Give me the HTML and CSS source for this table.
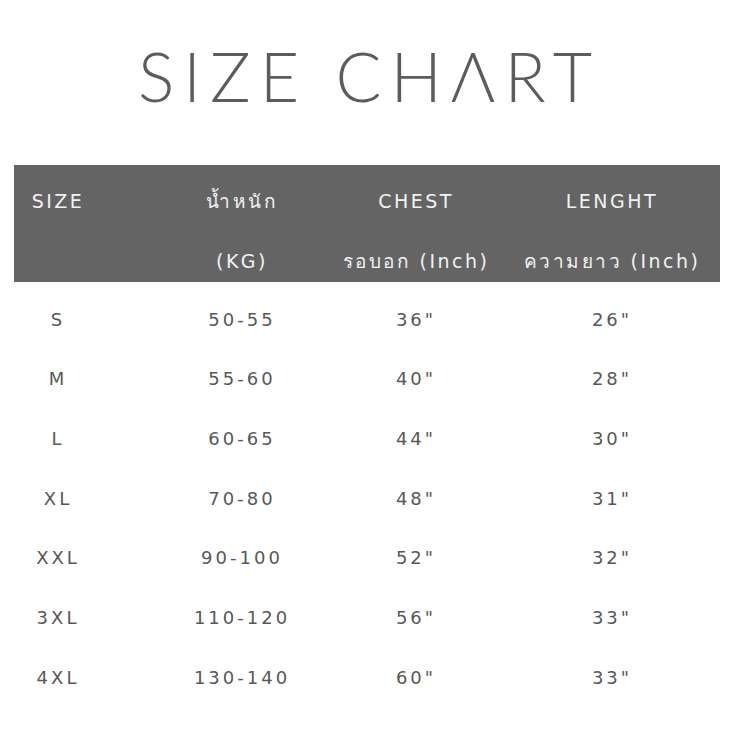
FILE: index.html
```html
<!DOCTYPE html>
<html lang="th">
<head>
<meta charset="utf-8">
<title>Size Chart</title>
<link rel="stylesheet" href="styles.css">
</head>
<body>
<main class="page">
  <h1 class="title">SIZE CHΛRT</h1>
  <section class="chart">
    <div class="head grid">
      <div class="cell r1">SIZE</div>
      <div class="cell r1">น้ำหนัก</div>
      <div class="cell r1">CHEST</div>
      <div class="cell r1">LENGHT</div>
      <div class="cell r2"></div>
      <div class="cell r2">(KG)</div>
      <div class="cell r2">รอบอก (Inch)</div>
      <div class="cell r2">ความยาว (Inch)</div>
    </div>
    <div class="body grid">
      <div class="cell">S</div><div class="cell">50-55</div><div class="cell">36"</div><div class="cell">26"</div>
      <div class="cell">M</div><div class="cell">55-60</div><div class="cell">40"</div><div class="cell">28"</div>
      <div class="cell">L</div><div class="cell">60-65</div><div class="cell">44"</div><div class="cell">30"</div>
      <div class="cell">XL</div><div class="cell">70-80</div><div class="cell">48"</div><div class="cell">31"</div>
      <div class="cell">XXL</div><div class="cell">90-100</div><div class="cell">52"</div><div class="cell">32"</div>
      <div class="cell">3XL</div><div class="cell">110-120</div><div class="cell">56"</div><div class="cell">33"</div>
      <div class="cell">4XL</div><div class="cell">130-140</div><div class="cell">60"</div><div class="cell">33"</div>
    </div>
  </section>
</main>
</body>
</html>
```
FILE: styles.css
```css
html, body {
  margin: 0;
  padding: 0;
  background: #ffffff;
}
.page {
  width: 732px;
  height: 732px;
  overflow: hidden;
  font-family: "DejaVu Sans", "Noto Sans", sans-serif;
}
.title {
  margin: 0;
  height: 165px;
  box-sizing: border-box;
  padding-top: 36px;
  padding-left: 7px;
  text-align: center;
  font-family: "Lato", sans-serif;
  font-weight: 300;
  font-size: 68px;
  line-height: 80px;
  letter-spacing: 9px;
  color: #5c5c5c;
}
.chart {
  margin: 0 12px 0 14px;
}
.grid {
  display: grid;
  grid-template-columns: 88px 140px 68px 184px;
  column-gap: 70px;
}
.cell {
  display: flex;
  justify-content: center;
  align-items: center;
  white-space: nowrap;
  line-height: 24px;
}
.head {
  background: #646464;
  height: 117px;
  box-sizing: border-box;
  padding-top: 6px;
  grid-template-rows: 60px 51px;
  color: #f2f2f2;
  font-size: 19px;
  letter-spacing: 2.5px;
}
.head .r2 {
  align-items: flex-start;
  padding-top: 18px;
}
.body {
  padding-top: 8px;
  grid-auto-rows: 59.67px;
  color: #585858;
  font-size: 18px;
  letter-spacing: 3px;
}
```
